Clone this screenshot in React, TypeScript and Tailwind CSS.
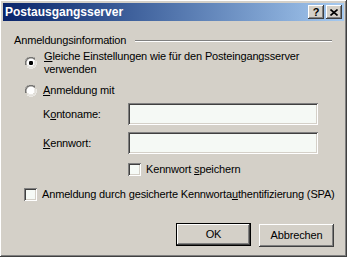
const raised =
  "shadow-[inset_-1px_-1px_#404040,inset_1px_1px_#ffffff,inset_-2px_-2px_#808080,inset_2px_2px_#d4d0c8]";
const sunken =
  "shadow-[inset_1px_1px_#808080,inset_-1px_-1px_#ffffff,inset_2px_2px_#404040,inset_-2px_-2px_#d4d0c8]";

const Radio = ({ checked }: { checked?: boolean }) => (
  <svg width="12" height="12" viewBox="0 0 12 12" className="shrink-0">
    <path d="M4 0h4M2 1h2M8 1h2M1 2h1M0 4v4M1 2v2" stroke="#808080" />
    <path d="M4 1h4M2 2h2M8 2h2M1 4v4M2 3v1" stroke="#404040" />
    <circle cx="6" cy="6" r="4.5" fill="#ffffff" />
    <path d="M1 8h0M2 10h2M8 10h2M4 11h4M10 8v2M11 4v4" stroke="#ffffff" />
    <path d="M2 9h2M8 9h2M4 10h4M10 4v4M9 8v1" stroke="#d4d0c8" />
    {checked && <rect x="4" y="4" width="4" height="4" rx="1.2" fill="#000000" />}
  </svg>
);

const Check = () => <div className={`w-[13px] h-[13px] shrink-0 bg-[#f6faf6] ${sunken}`} />;

const Input = () => <div className={`w-[190px] h-[22px] bg-[#f5f9f5] ${sunken}`} />;

export default function App() {
  return (
    <div
      className={`w-[347px] h-[257px] bg-[#d4d0c8] p-[3px] flex flex-col text-[11px] leading-[13px] tracking-[-0.16px] text-black ${raised}`}
      style={{ fontFamily: "'Liberation Sans', Arial, sans-serif" }}
    >
      <div className="h-[18px] flex items-center bg-linear-to-r from-[#0a246a] to-[#a6caf0] pl-[2px] pr-[2px] tracking-normal">
        <span className="text-white font-bold text-[12px] flex-1">Postausgangsserver</span>
        <div className={`w-[16px] h-[14px] bg-[#d4d0c8] flex items-center justify-center font-bold text-[11px] ${raised}`}>?</div>
        <div className={`w-[16px] h-[14px] ml-[2px] bg-[#d4d0c8] flex items-center justify-center ${raised}`}>
          <svg width="8" height="7" viewBox="0 0 8 7">
            <path d="M0.5 0.5l7 6M7.5 0.5l-7 6" stroke="#000" strokeWidth="1.6" />
          </svg>
        </div>
      </div>

      <div className="flex items-center mt-[13px] pl-[11px] pr-[12px]">
        <span>Anmeldungsinformation</span>
        <div className="flex-1 ml-[9px] border-t border-t-[#808080] border-b border-b-white" />
      </div>

      <div className="flex items-center mt-[3px] pl-[22px]">
        <Radio checked />
        <span className="ml-[7px]">
          <u>G</u>leiche Einstellungen wie für den Posteingangsserver
          <br />
          verwenden
        </span>
      </div>

      <div className="flex items-center mt-[8px] pl-[22px]">
        <Radio />
        <span className="ml-[6px]">
          <u>A</u>nmeldung mit
        </span>
      </div>

      <div className="flex items-center mt-[6px] pl-[40px]">
        <span className="w-[85px]">
          K<u>o</u>ntoname:
        </span>
        <Input />
      </div>

      <div className="flex items-center mt-[7px] pl-[40px]">
        <span className="w-[85px]">
          <u>K</u>ennwort:
        </span>
        <Input />
      </div>

      <div className="flex items-center mt-[9px] pl-[125px]">
        <Check />
        <span className="ml-[5px]">
          Kennwort <u>s</u>peichern
        </span>
      </div>

      <div className="flex items-center mt-[12px] pl-[21px]">
        <Check />
        <span className="ml-[5px]">
          Anmeldung durch gesicherte Kennworta<u>u</u>thentifizierung (SPA)
        </span>
      </div>

      <div className="flex justify-end gap-[8px] mt-[22px] pr-[10px]">
        <div className="w-[75px] h-[23px] border border-black">
          <div className={`w-full h-full bg-[#d4d0c8] flex items-center justify-center ${raised}`}>OK</div>
        </div>
        <div className={`w-[75px] h-[23px] mt-px bg-[#d4d0c8] flex items-center justify-center ${raised}`}>
          Abbrechen
        </div>
      </div>
    </div>
  );
}
